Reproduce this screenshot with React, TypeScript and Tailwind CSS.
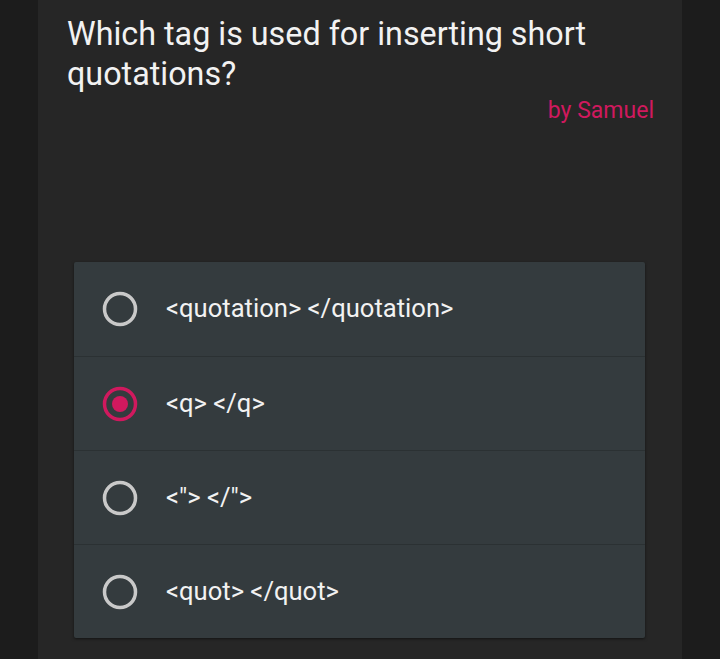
import React from "react";

const options = [
  { label: "<quotation> </quotation>", selected: false },
  { label: "<q> </q>", selected: true },
  { label: '<"> </">', selected: false },
  { label: "<quot> </quot>", selected: false },
];

function Radio({ selected }: { selected: boolean }) {
  return (
    <svg width="38" height="38" viewBox="0 0 38 38">
      <circle
        cx="19"
        cy="19"
        r="15.5"
        fill="none"
        stroke={selected ? "#d0195e" : "#c9c9c9"}
        strokeWidth="3.5"
      />
      {selected && <circle cx="19" cy="19" r="8" fill="#d0195e" />}
    </svg>
  );
}

export default function App() {
  return (
    <div
      className="w-[720px] h-[659px] bg-[#1c1c1c] flex justify-center overflow-hidden"
      style={{ fontFamily: "Roboto, 'Noto Sans', sans-serif" }}
    >
      <div className="w-[644px] h-full bg-[#262626] flex flex-col">
        <div className="pl-[29px] pr-[20px] pt-[14px]">
          <h1 className="text-[32.3px] leading-[40px] text-[#f2f2f2] font-normal">
            Which tag is used for inserting short quotations?
          </h1>
          <div className="text-right pr-[8px] text-[23px] leading-[30px] text-[#d0195e] mt-[2px]">
            by Samuel
          </div>
        </div>
        <div className="mt-[136px] ml-[36px] w-[571px] bg-[#343b3e] rounded-[2px] shadow-[0_1px_3px_rgba(0,0,0,0.5)] flex flex-col">
          {options.map((o, i) => (
            <div
              key={i}
              className={
                "h-[94px] flex items-center pl-[27px] gap-[27px] " +
                (i > 0 ? "border-t border-[#2b3133]" : "")
              }
            >
              <Radio selected={o.selected} />
              <span className="text-[25.6px] text-[#f2f2f2] leading-none">
                {o.label}
              </span>
            </div>
          ))}
        </div>
      </div>
    </div>
  );
}
